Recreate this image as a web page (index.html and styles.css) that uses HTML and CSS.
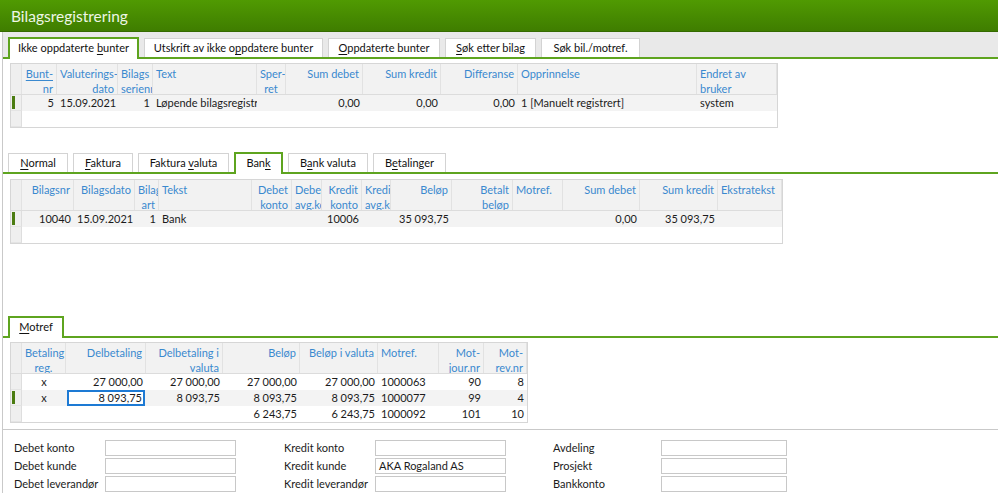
FILE: index.html
```html
<!DOCTYPE html>
<html lang="no">
<head>
<meta charset="utf-8">
<title>Bilagsregistrering</title>
<link rel="stylesheet" href="styles.css">
</head>
<body>
<header class="titlebar">Bilagsregistrering</header>
<div class="workspace">
  <nav class="tabs tabs-gray tabs-main">
    <div class="tab active">Ikke oppdaterte <u>b</u>unter</div>
    <div class="tab">Utskrift av ikke o<u>p</u>pdatere bunter</div>
    <div class="tab"><u>O</u>ppdaterte bunter</div>
    <div class="tab"><u>S</u>øk etter bilag</div>
    <div class="tab">Søk bil./motref.</div>
  </nav>

  <section class="grid g1">
    <div class="row head">
      <div class="c ind"></div>
      <div class="c r sort">Bunt-<br>nr</div>
      <div class="c r">Valuterings-<br>dato</div>
      <div class="c r">Bilags<br>serienr</div>
      <div class="c">Text</div>
      <div class="c m">Sper-<br>ret</div>
      <div class="c r">Sum debet</div>
      <div class="c r">Sum kredit</div>
      <div class="c r">Differanse</div>
      <div class="c">Opprinnelse</div>
      <div class="c">Endret av<br>bruker</div>
    </div>
    <div class="row cur">
      <div class="c ind cur-mark"></div>
      <div class="c r">5</div>
      <div class="c r">15.09.2021</div>
      <div class="c r">1</div>
      <div class="c">Løpende bilagsregistrering</div>
      <div class="c"></div>
      <div class="c r">0,00</div>
      <div class="c r">0,00</div>
      <div class="c r">0,00</div>
      <div class="c">1 [Manuelt registrert]</div>
      <div class="c">system</div>
    </div>
    <div class="row">
      <div class="c ind"></div>
    </div>
  </section>

  <nav class="tabs tabs-sub">
    <div class="tab"><u>N</u>ormal</div>
    <div class="tab"><u>F</u>aktura</div>
    <div class="tab">Faktura <u>v</u>aluta</div>
    <div class="tab active">Ban<u>k</u></div>
    <div class="tab">B<u>a</u>nk valuta</div>
    <div class="tab">B<u>e</u>talinger</div>
  </nav>

  <section class="grid g2">
    <div class="row head">
      <div class="c ind"></div>
      <div class="c r">Bilagsnr</div>
      <div class="c r">Bilagsdato</div>
      <div class="c r">Bilags<br>art</div>
      <div class="c">Tekst</div>
      <div class="c r">Debet<br>konto</div>
      <div class="c r">Debet<br>avg.kode</div>
      <div class="c r">Kredit<br>konto</div>
      <div class="c r">Kredit<br>avg.kode</div>
      <div class="c r">Beløp</div>
      <div class="c r">Betalt<br>beløp</div>
      <div class="c">Motref.</div>
      <div class="c r">Sum debet</div>
      <div class="c r">Sum kredit</div>
      <div class="c">Ekstratekst</div>
    </div>
    <div class="row cur">
      <div class="c ind cur-mark"></div>
      <div class="c r">10040</div>
      <div class="c r">15.09.2021</div>
      <div class="c r">1</div>
      <div class="c">Bank</div>
      <div class="c"></div>
      <div class="c"></div>
      <div class="c r">10006</div>
      <div class="c"></div>
      <div class="c r">35 093,75</div>
      <div class="c"></div>
      <div class="c"></div>
      <div class="c r">0,00</div>
      <div class="c r">35 093,75</div>
      <div class="c"></div>
    </div>
    <div class="row">
      <div class="c ind"></div>
    </div>
  </section>

  <nav class="tabs tabs-sub tabs-motref">
    <div class="tab active"><u>M</u>otref</div>
  </nav>

  <section class="grid g3">
    <div class="row head">
      <div class="c ind"></div>
      <div class="c m">Betaling<br>reg.</div>
      <div class="c r">Delbetaling</div>
      <div class="c r">Delbetaling i<br>valuta</div>
      <div class="c r">Beløp</div>
      <div class="c r">Beløp i valuta</div>
      <div class="c">Motref.</div>
      <div class="c r">Mot-<br>jour.nr</div>
      <div class="c r">Mot-<br>rev.nr</div>
    </div>
    <div class="row">
      <div class="c ind"></div>
      <div class="c m">x</div>
      <div class="c r">27 000,00</div>
      <div class="c r">27 000,00</div>
      <div class="c r">27 000,00</div>
      <div class="c r">27 000,00</div>
      <div class="c">1000063</div>
      <div class="c r">90</div>
      <div class="c r">8</div>
    </div>
    <div class="row cur">
      <div class="c ind cur-mark"></div>
      <div class="c m">x</div>
      <div class="c r focus">8 093,75</div>
      <div class="c r">8 093,75</div>
      <div class="c r">8 093,75</div>
      <div class="c r">8 093,75</div>
      <div class="c">1000077</div>
      <div class="c r">99</div>
      <div class="c r">4</div>
    </div>
    <div class="row">
      <div class="c ind"></div>
      <div class="c"></div>
      <div class="c"></div>
      <div class="c"></div>
      <div class="c r">6 243,75</div>
      <div class="c r">6 243,75</div>
      <div class="c">1000092</div>
      <div class="c r">101</div>
      <div class="c r">10</div>
    </div>
  </section>

  <section class="form">
    <div class="fgroup">
      <label class="flabel">Debet konto</label><div class="finput"></div>
      <label class="flabel">Debet kunde</label><div class="finput"></div>
      <label class="flabel">Debet leverandør</label><div class="finput"></div>
    </div>
    <div class="fgroup">
      <label class="flabel">Kredit konto</label><div class="finput"></div>
      <label class="flabel">Kredit kunde</label><div class="finput">AKA Rogaland AS</div>
      <label class="flabel">Kredit leverandør</label><div class="finput"></div>
    </div>
    <div class="fgroup fgroup-wide">
      <label class="flabel">Avdeling</label><div class="finput"></div>
      <label class="flabel">Prosjekt</label><div class="finput"></div>
      <label class="flabel">Bankkonto</label><div class="finput"></div>
    </div>
  </section>
</div>
</body>
</html>
```

FILE: styles.css
```css
* { box-sizing: border-box; }

html, body { margin: 0; padding: 0; }

body {
  width: 998px;
  height: 493px;
  overflow: hidden;
  background: #fff;
  color: #1b1b1b;
  font-family: Lato, "Noto Sans", sans-serif;
  font-size: 11px;
}

u { text-decoration: underline; text-underline-offset: 2px; }

/* title */
.titlebar {
  height: 32px;
  padding-left: 11px;
  display: flex;
  align-items: center;
  background: linear-gradient(#509a02, #3f7d00);
  border-bottom: 1px solid #356a00;
  color: #eef6e6;
  font-size: 15.5px;
}

.workspace {
  margin-left: 2px;
  border-left: 1px solid #c9c9c9;
  height: 461px;
}

/* tabs */
.tabs {
  display: flex;
  align-items: flex-end;
  gap: 5px;
  padding-left: 5px;
  border-bottom: 2px solid #5ea41f;
}
.tabs-gray { background: #e9e9e9; padding-top: 5px; }
.tabs-sub { margin-top: 24px; }
.tabs-motref { margin-top: 72px; }

.tab {
  height: 19px;
  border: 1px solid #d3d3d3;
  border-bottom: 0;
  background: #fff;
  text-align: center;
  line-height: 17px;
  white-space: nowrap;
  color: #111;
}
.tab.active {
  height: 22px;
  border: 2px solid #5ea41f;
  border-bottom: 0;
  margin-bottom: -2px;
  line-height: 17px;
}

.tabs-main .tab:nth-child(1) { width: 131px; }
.tabs-main .tab:nth-child(2) { width: 179px; }
.tabs-main .tab:nth-child(3) { width: 112px; }
.tabs-main .tab:nth-child(4) { width: 91px; }
.tabs-main .tab:nth-child(5) { width: 99px; }

.tabs-sub .tab:nth-child(1) { width: 60px; }
.tabs-sub .tab:nth-child(2) { width: 60px; }
.tabs-sub .tab:nth-child(3) { width: 91px; }
.tabs-sub .tab:nth-child(4) { width: 49px; }
.tabs-sub .tab:nth-child(5) { width: 80px; }
.tabs-sub .tab:nth-child(6) { width: 73px; }
.tabs-motref .tab:nth-child(1) { width: 56px; }

/* grids */
.grid {
  margin-left: 7px;
  border: 1px solid #d6d6d6;
  background: #fff;
}
.g1 { width: 768px; margin-top: 4px; }
.g2 { width: 773px; margin-top: 5px; }
.g3 { width: 518px; margin-top: 4px; }

.row { display: grid; height: 16px; }
.g1 .row { grid-template-columns: 11px 35px 61px 35px 104px 29px 77px 78px 77px 179px 80px; }
.g2 .row { grid-template-columns: 11px 52px 61px 24px 93px 40px 30px 40px 29px 61px 61px 50px 77px 78px 64px; }
.g3 .row { grid-template-columns: 11px 44px 80px 77px 77px 78px 61px 45px 43px; }

.row.head {
  height: 31px;
  background: #f2f2f2;
  border-bottom: 1px solid #dcdcdc;
  color: #3a89cf;
}
.row.cur { background: #f3f3f3; }

.c {
  padding: 0 3px;
  overflow: hidden;
  white-space: nowrap;
  line-height: 16px;
}
.head .c {
  line-height: 15px;
  padding-top: 2px;
  border-right: 1px solid #e2e2e2;
}
.r { text-align: right; }
.m { text-align: center; }
.sort { text-decoration: underline; text-underline-offset: 2px; }

.ind {
  padding: 0;
  background: #efefef;
  border-right: 1px solid #dedede;
  border-bottom: 1px solid #e4e4e4;
}
.head .ind { border-bottom: 0; }
.cur-mark::before {
  content: "";
  display: block;
  width: 3px;
  height: 13px;
  margin: 1px 0 0 1px;
  background: #4b7c11;
}
.focus {
  box-shadow: inset 0 0 0 2px #1d7ad4;
  background: #fff;
  margin: 0 1px;
}

/* form */
.form {
  margin-top: 6px;
  border-top: 1px solid #c9c9c9;
  padding: 10px 0 0 11px;
  display: flex;
  gap: 48px;
}
.fgroup {
  display: grid;
  grid-template-columns: 91px 131px;
  grid-auto-rows: 16px;
  row-gap: 2px;
}
.fgroup-wide { grid-template-columns: 108px 126px; margin-left: -1px; }
.flabel { line-height: 16px; color: #1b1b1b; white-space: nowrap; }
.finput {
  height: 16px;
  border: 1px solid #c8c8c8;
  padding: 0 3px;
  line-height: 14px;
  background: #fff;
  white-space: nowrap;
}
```
